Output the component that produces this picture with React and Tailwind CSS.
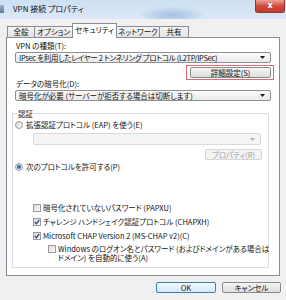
import React from "react";

const Arrow = ({ disabled }) => (
  <svg width="5" height="3" viewBox="0 0 5 3" className="shrink-0">
    <path d="M0 0H5L2.5 3Z" fill={disabled ? "#b0b0b0" : "#1a1a1a"} />
  </svg>
);

function Select({ children, className = "", textClass = "", disabled }) {
  return (
    <div
      className={
        "flex items-center justify-between pl-[3px] pr-[5px] rounded-[2px] border " +
        (disabled
          ? "border-[#d9d9d9] bg-[#f4f4f4] text-[#a0a0a0] "
          : "border-[#8e8f8f] bg-gradient-to-b from-[#fbfbfb] to-[#e9e9e9] text-[#111] ") +
        className
      }
    >
      <span className={"whitespace-nowrap leading-none " + textClass}>{children}</span>
      <Arrow disabled={disabled} />
    </div>
  );
}

function Button({ children, className = "", disabled, focused }) {
  return (
    <div
      className={
        "flex items-center justify-center rounded-[2px] border leading-none whitespace-nowrap " +
        (disabled
          ? "border-[#d5d5d5] bg-[#f4f4f4] text-[#9c9c9c] "
          : focused
          ? "border-[#3c7fb1] bg-gradient-to-b from-[#f4f9fd] to-[#d6e9f9] text-[#111] "
          : "border-[#8a8a8a] bg-gradient-to-b from-[#f6f6f6] to-[#dddddd] text-[#111] ") +
        className
      }
    >
      {children}
    </div>
  );
}

function Radio({ checked }) {
  return (
    <div className="w-[8px] h-[8px] rounded-full border border-[#9a9a9a] bg-gradient-to-br from-[#d8d8d8] to-[#fbfbfb] flex items-center justify-center shrink-0">
      {checked && <div className="w-[4px] h-[4px] rounded-full bg-[#2f6db5]" />}
    </div>
  );
}

function Check({ checked }) {
  return (
    <div className="w-[8px] h-[8px] border border-[#9a9a9a] bg-gradient-to-br from-[#dadada] to-[#fbfbfb] flex items-center justify-center shrink-0">
      {checked && (
        <svg width="6" height="6" viewBox="0 0 6 6">
          <path d="M0.8 3 L2.4 4.7 L5.3 0.9" stroke="#2d4a8c" strokeWidth="1.3" fill="none" />
        </svg>
      )}
    </div>
  );
}

function Tab({ children, active, w, first }) {
  return (
    <div
      className={
        "flex items-center justify-center border-t border-l border-r border-[#898c95] leading-none whitespace-nowrap " +
        (first ? "" : "-ml-[1px] ") +
        (active
          ? "h-[15px] bg-white relative z-10 pb-[3px] "
          : "h-[11px] mb-[1px] bg-gradient-to-b from-[#f4f4f4] to-[#e3e3e3] ") +
        w
      }
    >
      {children}
    </div>
  );
}

export default function App() {
  return (
    <div className="w-[286px] h-[300px] overflow-hidden flex flex-col bg-[#f0f0f0] text-[7.5px] text-[#111] font-['Noto_Sans_CJK_JP',sans-serif] [font-feature-settings:'palt']">
      {/* Title bar */}
      <div className="h-[19px] shrink-0 flex items-start justify-between bg-[radial-gradient(34px_9px_at_172px_15px,#a3c0e2,transparent),linear-gradient(#cddff2,#dbe8f6)]">
        <div className="flex items-center h-[18px]">
          <div className="w-[4px] h-[8px] bg-gradient-to-b from-[#9fb3c8] to-[#5f7d9c]" />
          <span className="ml-[9px] text-[8px] leading-none text-[#111]">VPN 接続 プロパティ</span>
        </div>
        <div className="mr-[1px] w-[30px] h-[13px] rounded-b-[3px] border border-t-0 border-[#8e3a33] bg-gradient-to-b from-[#e9a397] via-[#d0493d] to-[#c43a2f] flex items-center justify-center">
          <span className="text-white text-[8px] font-bold leading-none font-['DejaVu_Sans',sans-serif]">x</span>
        </div>
      </div>

      {/* Tabs */}
      <div className="h-[19px] shrink-0 pl-[7px] flex items-end relative z-10">
        <Tab first w="w-[28px]">全般</Tab>
        <Tab w="w-[39px]">オプション</Tab>
        <Tab active w="w-[45px]">セキュリティ</Tab>
        <Tab w="w-[44px]">ネットワーク</Tab>
        <Tab w="w-[30px]">共有</Tab>
      </div>

      {/* Panel */}
      <div className="-mt-[1px] ml-[6px] w-[274px] h-[239px] shrink-0 border border-[#898c95] bg-white flex flex-col pl-[8px]">
        <div className="mt-[3px] ml-[1px] h-[10px] leading-[10px] whitespace-nowrap">VPN の種類(T):</div>
        <Select className="mt-[1px] h-[11px] w-[256px]" textClass="tracking-[-0.3px]">
          IPsec を利用したレイヤー 2 トンネリング プロトコル (L2TP/IPSec)
        </Select>
        <div className="mt-[2px] ml-[171px] w-[88px] h-[15px] border border-[#e06a6a] flex flex-col">
          <Button className="ml-[3px] mt-[1px] w-[81px] h-[11px]">詳細設定(S)</Button>
        </div>
        <div className="-mt-[1px] ml-[1px] h-[9px] leading-[9px] whitespace-nowrap">データの暗号化(D):</div>
        <Select className="mt-[2px] h-[11px] w-[256px]">
          暗号化が必要 (サーバーが拒否する場合は切断します)
        </Select>

        {/* Group box */}
        <div className="mt-[12px] -ml-[3px] w-[257px] h-[155px] border border-[#d5dfe5] relative flex flex-col">
          <div className="absolute -top-[5px] left-[4px] px-[1px] bg-white leading-[9px]">認証</div>
          <div className="mt-[6px] h-[10px] flex items-center pl-[2px] gap-[3px]">
            <Radio />
            <span className="leading-none whitespace-nowrap">拡張認証プロトコル (EAP) を使う(E)</span>
          </div>
          <Select disabled className="mt-[3px] ml-[20px] w-[228px] h-[12px]">{""}</Select>
          <Button disabled className="mt-[4px] ml-[192px] w-[57px] h-[11px]">プロパティ(R)</Button>
          <div className="mt-[2px] h-[10px] flex items-center pl-[2px] gap-[3px]">
            <Radio checked />
            <span className="leading-none whitespace-nowrap">次のプロトコルを許可する(P)</span>
          </div>

          <div className="mt-[29px] h-[14px] flex items-center pl-[20px] gap-[2px]">
            <Check />
            <span className="leading-none whitespace-nowrap">暗号化されていないパスワード (PAPXU)</span>
          </div>
          <div className="h-[14px] flex items-center pl-[20px] gap-[2px]">
            <Check checked />
            <span className="leading-none whitespace-nowrap">チャレンジ ハンドシェイク認証プロトコル (CHAPXH)</span>
          </div>
          <div className="h-[14px] flex items-center pl-[20px] gap-[2px]">
            <Check checked />
            <span className="leading-none whitespace-nowrap">Microsoft CHAP Version 2 (MS-CHAP v2)(C)</span>
          </div>
          <div className="mt-[1px] flex items-start pl-[35px] gap-[2px]">
            <div className="mt-[1px]">
              <Check />
            </div>
            <p className="leading-[9px] whitespace-nowrap">
              Windows のログオン名とパスワード (およびドメインがある場合は
              <br />
              ドメイン) を自動的に使う(A)
            </p>
          </div>
        </div>
      </div>

      {/* Bottom buttons */}
      <div className="mt-[6px] flex justify-end gap-[6px] pr-[5px]">
        <Button focused className="w-[60px] h-[11px]">OK</Button>
        <Button className="w-[59px] h-[11px]">キャンセル</Button>
      </div>
    </div>
  );
}
